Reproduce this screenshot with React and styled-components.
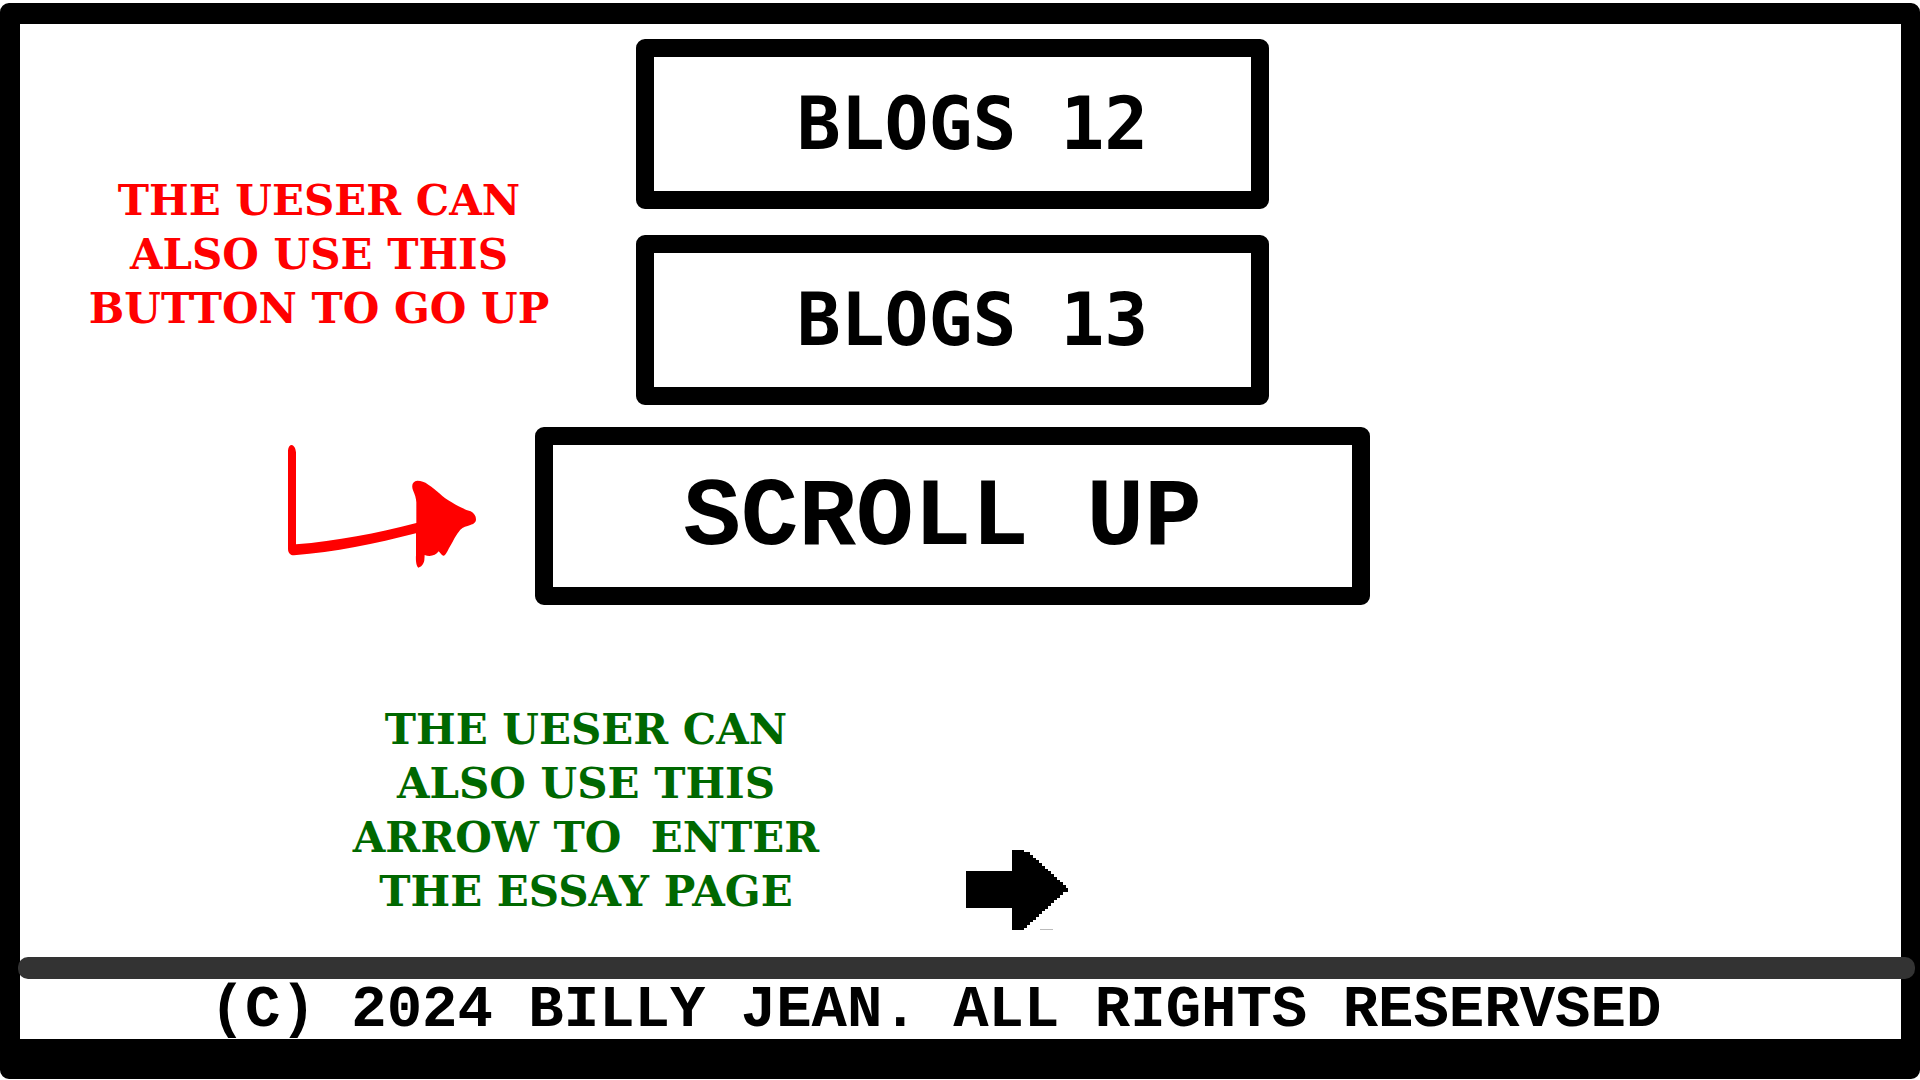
import React from "react";
import styled, { createGlobalStyle } from "styled-components";

const GlobalStyle = createGlobalStyle`
  *, *::before, *::after { box-sizing: border-box; }
  body { margin: 0; background: #fff; }
`;

const Frame = styled.div`
  display: flex;
  flex-direction: column;
  min-height: calc(100vh - 4px);
  margin: 3px 0 1px;
  border: solid #000;
  border-width: 21px 19px 40px 20px;
  border-radius: 9px;
  background: #fff;
`;

const Main = styled.main`
  flex: 1;
  display: flex;
  flex-direction: column;
  gap: 22px;
  padding: 15px 16px 0 0;
`;

const Row = styled.section`
  display: grid;
  grid-template-columns: 1fr ${(p) => p.$center}px 1fr;
`;

const ButtonStack = styled.div`
  display: flex;
  flex-direction: column;
  gap: 26px;
`;

const BoxButton = styled.button`
  height: 170px;
  padding: 0 0 0 40px;
  border: 18px solid #000;
  border-radius: 9px;
  background: #fff;
  color: #000;
  font: bold 73px/80px "DejaVu Sans Mono", monospace;
  white-space: nowrap;
  cursor: pointer;
`;

const ScrollButton = styled(BoxButton)`
  height: 178px;
  padding: 6px 20px 0 0;
  font: bold 96px/100px "Liberation Mono", monospace;
`;

const Note = styled.p`
  margin: 0;
  color: ${(p) => p.$color};
  font: bold 42px/54px "DejaVu Serif", serif;
  text-align: center;
  white-space: pre;
`;

const SideNote = styled.div`
  display: flex;
  justify-content: center;
  align-items: flex-start;
  padding: 135px 18px 0 0;
`;

const PointerCell = styled.div`
  display: flex;
  justify-content: flex-end;
  align-items: flex-start;
  padding: 18px 59px 0 0;
`;

const EssayRow = styled.section`
  flex: 1;
  display: flex;
  align-items: flex-end;
  gap: 140px;
  padding: 0 0 27px 326px;
`;

const EssayNote = styled.div`
  display: flex;
  justify-content: center;
  width: 480px;
  padding-bottom: 11px;
`;

const ArrowLink = styled.a`
  display: block;
  color: #000;
  line-height: 0;
`;

const Divider = styled.hr`
  height: 22px;
  margin: 0 -14px 0 -2px;
  border: 0;
  border-radius: 10px;
  background: #333;
`;

const Footer = styled.footer`
  display: flex;
  justify-content: center;
  align-items: center;
  height: 60px;
  padding: 4px 50px 0 0;
  color: #000;
  font: bold 59px/56px "Liberation Mono", monospace;
  white-space: nowrap;
`;

function HandArrow() {
  return (
    <svg width="188" height="123" viewBox="54 44 564 369" fill="#f00" aria-hidden="true">
      <path d="M54 60C55 49 60 44 65 44C72 45 77 54 78 66V342C200 332 320 309 439 278V216C438 204 435 193 429 180C423 163 429 152 442 151C454 151 463 154 475 163C500 179 517 200 545 216C563 227 584 238 602 243C612 248 618 257 618 267C618 277 610 282 601 284C590 288 579 290 571 298C558 312 549 333 539 350C533 360 527 377 520 376C514 375 511 367 506 363C497 377 478 380 464 374L463 390C461 402 453 411 445 412C438 406 437 388 438 374V309C315 341 195 365 72 375C60 375 54 367 54 355Z" />
    </svg>
  );
}

function PixelArrow() {
  const steps = 14;
  let top = "";
  let bottom = "";
  for (let i = 0; i < steps; i += 1) {
    const y = 2 + Math.round((i * 36) / (steps - 1));
    top += `H${61 + i * 3}V${y}`;
  }
  for (let i = steps - 1; i >= 0; i -= 1) {
    const y = 78 - Math.round((i * 36) / (steps - 1));
    bottom += `V${y}H${58 + i * 3}`;
  }
  return (
    <svg width="102" height="80" viewBox="0 0 102 80" fill="currentColor" shapeRendering="crispEdges" aria-hidden="true">
      <path d={`M0 21H46V0H58V2${top}H102V42${bottom}V80H46V58H0Z`} />
      <path fill="#bbb" d="M74 79h13v1h-13z" />
    </svg>
  );
}

export default function App() {
  return (
    <>
      <GlobalStyle />
      <Frame>
        <Main>
          <Row $center={633}>
            <SideNote>
              <Note $color="#f00">{"THE UESER CAN\nALSO USE THIS\nBUTTON TO GO UP"}</Note>
            </SideNote>
            <ButtonStack>
              <BoxButton type="button">BLOGS 12</BoxButton>
              <BoxButton type="button">BLOGS 13</BoxButton>
            </ButtonStack>
          </Row>
          <Row $center={835}>
            <PointerCell>
              <HandArrow />
            </PointerCell>
            <ScrollButton type="button">SCROLL UP</ScrollButton>
          </Row>
          <EssayRow>
            <EssayNote>
              <Note $color="#006800">{"THE UESER CAN\nALSO USE THIS\nARROW TO  ENTER\nTHE ESSAY PAGE"}</Note>
            </EssayNote>
            <ArrowLink href="#essay" aria-label="Essay page">
              <PixelArrow />
            </ArrowLink>
          </EssayRow>
        </Main>
        <Divider />
        <Footer>(C) 2024 BILLY JEAN. ALL RIGHTS RESERVSED</Footer>
      </Frame>
    </>
  );
}
